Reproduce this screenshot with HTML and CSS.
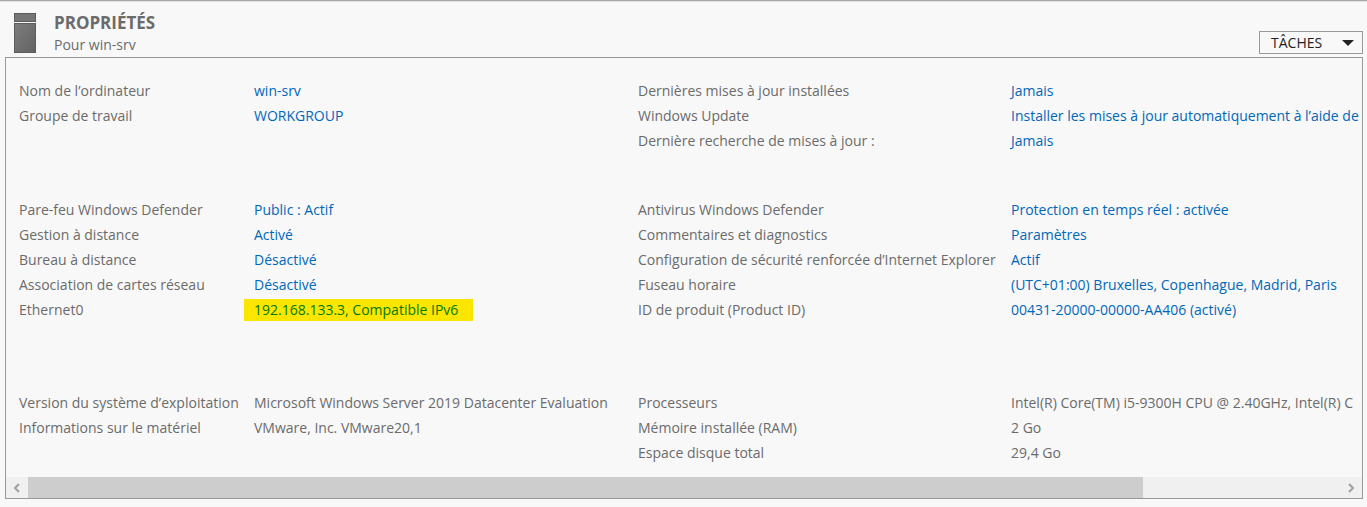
FILE: index.html
```html
<!DOCTYPE html>
<html lang="fr">
<head>
<meta charset="utf-8">
<meta name="viewport" content="width=device-width, initial-scale=1">
<title>Propriétés</title>
<link rel="stylesheet" href="styles.css">
</head>
<body>
<main class="tile">
  <header class="tile-header">
    <svg class="server-icon" viewBox="0 0 22 40" aria-hidden="true">
      <defs>
        <linearGradient id="metal" x1="0" y1="0" x2="1" y2="1">
          <stop offset="0" stop-color="#7e7e7e"/>
          <stop offset="1" stop-color="#626262"/>
        </linearGradient>
      </defs>
      <rect x="0.5" y="0.5" width="21" height="8" fill="#777" stroke="#5c5c5c"/>
      <rect x="0.5" y="10.5" width="21" height="29" fill="url(#metal)" stroke="#5c5c5c"/>
    </svg>
    <div class="heading">
      <h1 class="title">PROPRIÉTÉS</h1>
      <p class="subtitle">Pour win-srv</p>
    </div>
    <button class="tasks" type="button">TÂCHES
      <svg class="arrow" viewBox="0 0 12 6" aria-hidden="true"><path d="M0 0H12L6 6Z" fill="#222"/></svg>
    </button>
  </header>
  <section class="panel">
    <div class="properties">
      <div class="group">
        <dl class="list">
          <dt>Nom de l’ordinateur</dt><dd><a href="#">win-srv</a></dd>
          <dt>Groupe de travail</dt><dd><a href="#">WORKGROUP</a></dd>
        </dl>
        <dl class="list list-wide">
          <dt>Dernières mises à jour installées</dt><dd><a href="#">Jamais</a></dd>
          <dt>Windows Update</dt><dd><a href="#">Installer les mises à jour automatiquement à l’aide de</a></dd>
          <dt>Dernière recherche de mises à jour :</dt><dd><a href="#">Jamais</a></dd>
        </dl>
      </div>
      <div class="group group-settings">
        <dl class="list">
          <dt>Pare-feu Windows Defender</dt><dd><a href="#">Public : Actif</a></dd>
          <dt>Gestion à distance</dt><dd><a href="#">Activé</a></dd>
          <dt>Bureau à distance</dt><dd><a href="#">Désactivé</a></dd>
          <dt>Association de cartes réseau</dt><dd><a href="#">Désactivé</a></dd>
          <dt>Ethernet0</dt><dd><a class="highlight" href="#">192.168.133.3, Compatible IPv6</a></dd>
        </dl>
        <dl class="list list-wide">
          <dt>Antivirus Windows Defender</dt><dd><a href="#">Protection en temps réel : activée</a></dd>
          <dt>Commentaires et diagnostics</dt><dd><a href="#">Paramètres</a></dd>
          <dt>Configuration de sécurité renforcée d’Internet Explorer</dt><dd><a href="#">Actif</a></dd>
          <dt>Fuseau horaire</dt><dd><a href="#">(UTC+01:00) Bruxelles, Copenhague, Madrid, Paris</a></dd>
          <dt>ID de produit (Product ID)</dt><dd><a href="#">00431-20000-00000-AA406 (activé)</a></dd>
        </dl>
      </div>
      <div class="group">
        <dl class="list">
          <dt>Version du système d’exploitation</dt><dd>Microsoft Windows Server 2019 Datacenter Evaluation</dd>
          <dt>Informations sur le matériel</dt><dd>VMware, Inc. VMware20,1</dd>
        </dl>
        <dl class="list list-wide">
          <dt>Processeurs</dt><dd>Intel(R) Core(TM) i5-9300H CPU @ 2.40GHz, Intel(R) C</dd>
          <dt>Mémoire installée (RAM)</dt><dd>2 Go</dd>
          <dt>Espace disque total</dt><dd>29,4 Go</dd>
        </dl>
      </div>
    </div>
    <div class="scrollbar">
      <button class="scroll-button" type="button" aria-label="Défiler vers la gauche">
        <svg class="chevron" viewBox="0 0 6 10" aria-hidden="true"><path d="M5 1L1 5L5 9" fill="none" stroke="#a0a0a0" stroke-width="2"/></svg>
      </button>
      <div class="track"><div class="thumb"></div></div>
      <button class="scroll-button" type="button" aria-label="Défiler vers la droite">
        <svg class="chevron" viewBox="0 0 6 10" aria-hidden="true"><path d="M1 1L5 5L1 9" fill="none" stroke="#a0a0a0" stroke-width="2"/></svg>
      </button>
    </div>
  </section>
</main>
</body>
</html>
```
FILE: styles.css
```css
* {
  box-sizing: border-box;
}

body {
  margin: 0;
  background: #f8f8f8;
  color: #6b6b6b;
  font: 14px/25px "Open Sans", "Noto Sans", sans-serif;
}

.tile {
  border-top: 1px solid #a8a8a8;
  padding: 0 4px 8px 5px;
  box-shadow: inset 0 1px #e2e2e2;
}

.tile-header {
  display: flex;
  align-items: flex-start;
  height: 56px;
  padding: 12px 0 0 9px;
}

.server-icon {
  width: 22px;
  height: 40px;
}

.heading {
  flex: 1;
  margin-left: 18px;
}

.title {
  margin: 0;
  font-size: 17px;
  line-height: 20px;
  font-weight: 700;
}

.subtitle {
  margin: 0;
  line-height: 24px;
}

.tasks {
  display: flex;
  align-items: center;
  justify-content: space-between;
  width: 104px;
  height: 23px;
  margin-top: 18px;
  padding: 0 8px 0 11px;
  border: 1px solid #999;
  background: #f8f8f8;
  color: #222;
  font: inherit;
}

.arrow {
  width: 12px;
  height: 6px;
}

.panel {
  border: 1px solid #999;
}

.properties {
  padding: 20px 0 12px 13px;
  overflow: hidden;
  white-space: nowrap;
}

.group {
  display: grid;
  grid-template-columns: 619px 1fr;
}

.group-settings {
  margin: 44px 0 68px;
}

.list {
  display: grid;
  grid-template-columns: 235px 1fr;
  grid-auto-rows: 25px;
  align-content: start;
  margin: 0;
}

.list-wide {
  grid-template-columns: 373px 1fr;
}

dd {
  margin: 0;
}

a {
  color: #0067b8;
  text-decoration: none;
}

.highlight {
  margin-left: -10px;
  padding: 1px 15px 2px 10px;
  background: #fae600;
  color: #007a00;
}

.scrollbar {
  display: flex;
  height: 21px;
  background: #f0f0f0;
}

.scroll-button {
  display: flex;
  align-items: center;
  justify-content: center;
  width: 22px;
  padding: 0;
  border: 0;
  background: #f0f0f0;
}

.chevron {
  width: 6px;
  height: 10px;
}

.track {
  flex: 1;
}

.thumb {
  width: 85%;
  height: 100%;
  background: #cdcdcd;
}
```
